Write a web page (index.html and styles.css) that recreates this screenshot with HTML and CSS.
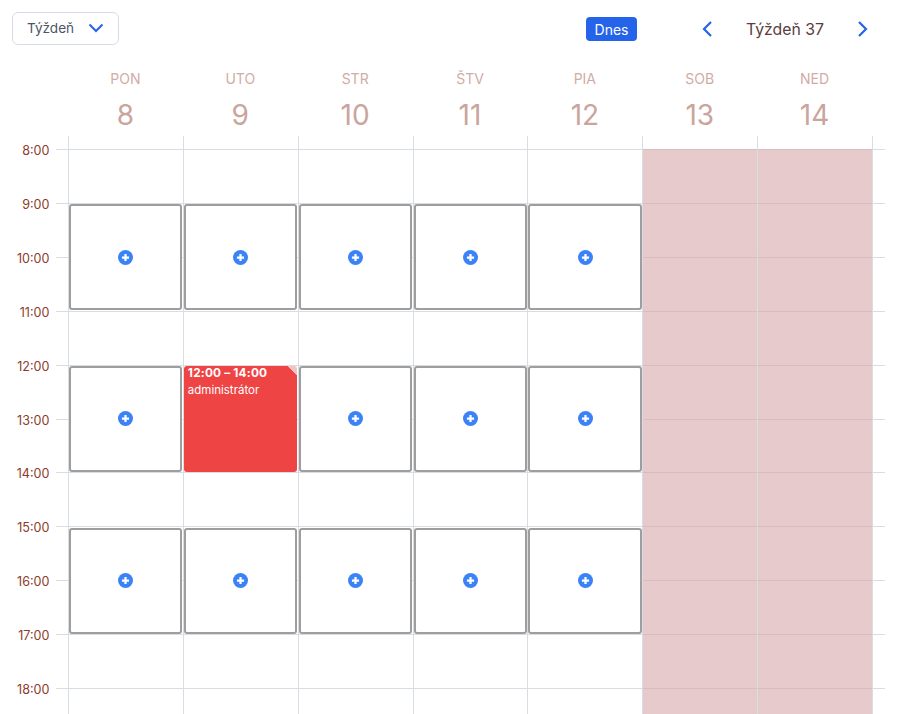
FILE: index.html
```html
<!DOCTYPE html>
<html lang="sk">
  <head>
    <meta charset="UTF-8" />
    <meta name="viewport" content="width=device-width, initial-scale=1.0" />
    <title>Kalendár</title>
    <link rel="stylesheet" href="styles.css">
  </head>
  <body>
    <svg class="icon-defs" width="0" height="0">
      <symbol id="plus" viewBox="0 0 16 16">
        <circle cx="8" cy="8" r="8" fill="#3b82f6" />
        <path d="M8 4.2v7.6M4.2 8h7.6" stroke="#fff" stroke-width="2.4" />
      </symbol>
    </svg>

    <div class="toolbar">
      <button class="view-select">
        <span>Týždeň</span>
        <svg width="16" height="10" viewBox="0 0 16 10"><path d="M1.5 1.5 8 8l6.5-6.5" fill="none" stroke="#2563eb" stroke-width="2" /></svg>
      </button>
      <button class="today">Dnes</button>
      <div class="week-nav">
        <svg width="12" height="18" viewBox="0 0 12 18"><path d="M10 2 3 9l7 7" fill="none" stroke="#2563eb" stroke-width="2.2" /></svg>
        <span class="week-title">Týždeň 37</span>
        <svg width="12" height="18" viewBox="0 0 12 18"><path d="m2 2 7 7-7 7" fill="none" stroke="#2563eb" stroke-width="2.2" /></svg>
      </div>
    </div>

    <div class="day-heads">
      <div class="day-head"><span class="day-name">PON</span><span class="day-num">8</span></div>
      <div class="day-head"><span class="day-name">UTO</span><span class="day-num">9</span></div>
      <div class="day-head"><span class="day-name">STR</span><span class="day-num">10</span></div>
      <div class="day-head"><span class="day-name">ŠTV</span><span class="day-num">11</span></div>
      <div class="day-head"><span class="day-name">PIA</span><span class="day-num">12</span></div>
      <div class="day-head"><span class="day-name">SOB</span><span class="day-num">13</span></div>
      <div class="day-head"><span class="day-name">NED</span><span class="day-num">14</span></div>
    </div>

    <div class="timetable">
      <div class="hours">
        <div class="hour"><span class="hour-label">8:00</span><span class="hour-line"></span></div>
        <div class="hour"><span class="hour-label">9:00</span><span class="hour-line"></span></div>
        <div class="hour"><span class="hour-label">10:00</span><span class="hour-line"></span></div>
        <div class="hour"><span class="hour-label">11:00</span><span class="hour-line"></span></div>
        <div class="hour"><span class="hour-label">12:00</span><span class="hour-line"></span></div>
        <div class="hour"><span class="hour-label">13:00</span><span class="hour-line"></span></div>
        <div class="hour"><span class="hour-label">14:00</span><span class="hour-line"></span></div>
        <div class="hour"><span class="hour-label">15:00</span><span class="hour-line"></span></div>
        <div class="hour"><span class="hour-label">16:00</span><span class="hour-line"></span></div>
        <div class="hour"><span class="hour-label">17:00</span><span class="hour-line"></span></div>
        <div class="hour"><span class="hour-label">18:00</span><span class="hour-line"></span></div>
      </div>

      <div class="columns">
        <div class="column"></div>
        <div class="column"></div>
        <div class="column"></div>
        <div class="column"></div>
        <div class="column"></div>
        <div class="column weekend"></div>
        <div class="column weekend"></div>
      </div>

      <div class="slots">
        <div class="slot"><svg class="add"><use href="#plus" /></svg></div>
        <div class="slot"><svg class="add"><use href="#plus" /></svg></div>
        <div class="slot"><svg class="add"><use href="#plus" /></svg></div>
        <div class="slot"><svg class="add"><use href="#plus" /></svg></div>
        <div class="slot"><svg class="add"><use href="#plus" /></svg></div>

        <div class="slot"><svg class="add"><use href="#plus" /></svg></div>
        <div class="booking">
          <span class="booking-time">12:00 – 14:00</span>
          <span class="booking-user">administrátor</span>
        </div>
        <div class="slot"><svg class="add"><use href="#plus" /></svg></div>
        <div class="slot"><svg class="add"><use href="#plus" /></svg></div>
        <div class="slot"><svg class="add"><use href="#plus" /></svg></div>

        <div class="slot"><svg class="add"><use href="#plus" /></svg></div>
        <div class="slot"><svg class="add"><use href="#plus" /></svg></div>
        <div class="slot"><svg class="add"><use href="#plus" /></svg></div>
        <div class="slot"><svg class="add"><use href="#plus" /></svg></div>
        <div class="slot"><svg class="add"><use href="#plus" /></svg></div>
      </div>
    </div>
  </body>
</html>
```

FILE: styles.css
```css
* {
  box-sizing: border-box;
}

html,
body {
  height: 714px;
  overflow: hidden;
}

body {
  margin: 0;
  background: #fff;
  font-family: Inter, "Liberation Sans", sans-serif;
}

.icon-defs {
  display: block;
  height: 0;
}

.toolbar {
  display: flex;
  align-items: center;
  height: 32px;
  margin: 12px 31px 0 12px;
}

.view-select {
  display: flex;
  align-items: center;
  justify-content: space-between;
  width: 107px;
  height: 33px;
  padding: 0 14px 0 14px;
  border: 1px solid #d6dce6;
  border-radius: 6px;
  background: #fff;
  color: #4b5563;
  font: inherit;
  font-size: 13.6px;
}

.today {
  height: 24px;
  width: 51px;
  margin: 2px 1px 0 auto;
  padding: 0;
  border: 0;
  border-radius: 4px;
  background: #2563eb;
  color: #fff;
  font: inherit;
  font-size: 14px;
}

.week-nav {
  display: flex;
  align-items: center;
  margin: 2px 0 0 63px;
}

.week-title {
  width: 144px;
  text-align: center;
  color: #5a3d3d;
  font-size: 15.8px;
}

.day-heads {
  display: grid;
  grid-template-columns: repeat(7, 114.86px);
  height: 92px;
  margin-left: 68px;
}

.day-head {
  display: flex;
  flex-direction: column;
  align-items: center;
  padding-top: 26px;
}

.day-name {
  line-height: 18px;
  color: #d0aca6;
  font-size: 14px;
}

.day-num {
  margin-top: 9px;
  line-height: 36px;
  color: #c9a59d;
  font-size: 28px;
}

/* the three layers share one grid cell */
.timetable {
  display: grid;
  width: 900px;
}

.hours,
.columns,
.slots {
  grid-area: 1 / 1;
}

.hours {
  padding-top: 13.4px;
}

.hour {
  display: flex;
  height: 53.85px;
}

.hour-label {
  width: 49.5px;
  height: 16px;
  margin-top: -6px;
  line-height: 16px;
  text-align: right;
  color: #8c3b2b;
  font-size: 12.6px;
}

.hour-line {
  width: 829px;
  height: 1px;
  margin-left: 6.5px;
  background: #d8dce3;
}

.columns {
  display: grid;
  grid-template-columns: repeat(7, 114.86px);
  margin-left: 68px;
}

.column {
  border-left: 1px solid #d8dce3;
}

.column:last-child {
  width: 115.86px;
  border-right: 1px solid #d8dce3;
}

.weekend {
  background: linear-gradient(transparent 13.4px, rgba(214, 167, 168, 0.6) 13.4px);
}

.slots {
  display: grid;
  grid-template-columns: repeat(5, 114.86px);
  grid-auto-rows: 107.7px;
  row-gap: 54px;
  align-self: start;
  margin-left: 68px;
  padding-top: 67.25px;
}

.slot {
  display: flex;
  align-items: center;
  justify-content: center;
  margin: 1px 0.5px 0.7px 1px;
  border: 2px solid #9e9e9e;
  border-radius: 3px;
  background: #fff;
}

.add {
  width: 15px;
  height: 15px;
}

.booking {
  display: flex;
  flex-direction: column;
  margin: 1px 0.5px 0.7px 1px;
  padding: 0 4px;
  border-radius: 3px;
  background: linear-gradient(225deg, #f0c4c4 7px, #ef4444 7px);
  color: #fff;
}

.booking-time {
  line-height: 14px;
  letter-spacing: 0.2px;
  white-space: nowrap;
  font-size: 11.8px;
  font-weight: 700;
}

.booking-user {
  margin-top: 3px;
  line-height: 14px;
  font-size: 11.5px;
}
```
